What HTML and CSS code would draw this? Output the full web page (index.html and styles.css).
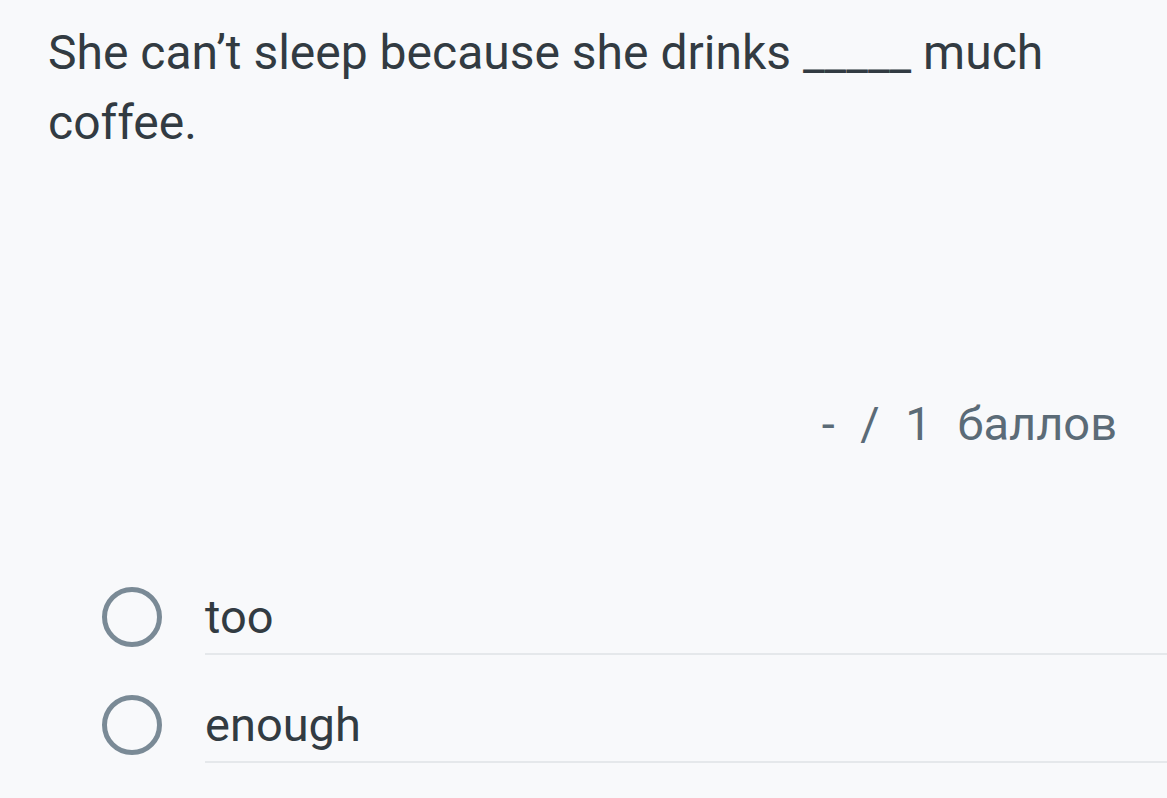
FILE: index.html
```html
<!DOCTYPE html>
<html lang="ru">
<head>
<meta charset="utf-8">
<link rel="stylesheet" href="styles.css">
</head>
<body>
<div class="page">
  <div class="question">She can’t sleep because she drinks _____ much coffee.</div>
  <div class="score">- / 1 баллов</div>
  <div class="options">
    <label class="option">
      <span class="radio"></span>
      <span class="option-text">too</span>
    </label>
    <label class="option">
      <span class="radio"></span>
      <span class="option-text">enough</span>
    </label>
  </div>
</div>
</body>
</html>
```
FILE: styles.css
```css
html, body {
  margin: 0;
  padding: 0;
  background: #f8f9fb;
}
.page {
  width: 1167px;
  height: 798px;
  overflow: hidden;
  font-family: Roboto, "Noto Sans", sans-serif;
  box-sizing: border-box;
  padding: 18px 0 0 48px;
}
.question {
  font-size: 48px;
  line-height: 70px;
  color: #323b42;
  width: 1080px;
}
.score {
  margin-top: 238px;
  padding-right: 50px;
  text-align: right;
  font-size: 47px;
  line-height: 56px;
  color: #5b6b77;
  word-spacing: 14px;
}
.options {
  margin-top: 135px;
  display: flex;
  flex-direction: column;
  gap: 40px;
}
.option {
  display: flex;
  align-items: flex-start;
}
.radio {
  width: 50px;
  height: 50px;
  border: 5px solid #7a8a96;
  border-radius: 50%;
  margin-left: 54px;
  flex: none;
}
.option-text {
  margin-left: 43px;
  flex: 1;
  font-size: 47px;
  line-height: 56px;
  padding-top: 2px;
  padding-bottom: 8px;
  color: #323b42;
  border-bottom: 2px solid #e5e8eb;
}
```
